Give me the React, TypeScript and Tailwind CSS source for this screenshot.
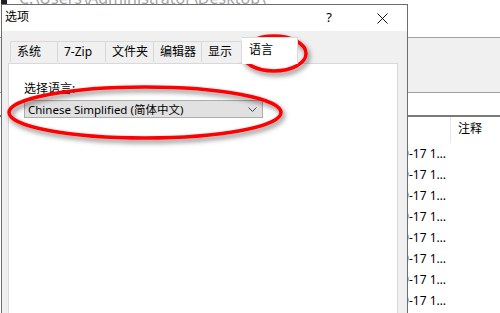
import { useState } from "react";

const font = { fontFamily: '"Noto Sans", "Noto Sans CJK SC", sans-serif' };

const tabs = ["系统", "7-Zip", "文件夹", "编辑器", "显示"];
const tabWidths = ["w-[47px]", "w-[48px]", "w-[48px]", "w-[48px]", "w-[41px]"];

const rows = Array.from({ length: 8 }, () => "2021-09-17 1…");

function Background() {
    return (
        <div className="flex flex-col w-full h-full bg-white text-[12px] text-black">
            <div className="h-[38px] bg-white border-b border-[#a0a0a0]">
                <div className="h-[4px] overflow-hidden flex items-end gap-[12px] pl-[1px]">
                    <span className="w-[6px] h-[4px] bg-[#222]" />
                    <span className="text-[#a5a5a5] text-[16px] leading-[16px] -mb-[2px]">C:\Users\Administrator\Desktop\</span>
                </div>
            </div>
            <div className="h-[55px] bg-[#f0f0f0] border-b border-[#a0a0a0]" />
            <div className="h-[24px] bg-white border-b-2 border-[#7a7a7a]" />
            <div className="flex h-[26px] items-center">
                <div className="w-[451px] h-full border-r border-[#e5e5e5]" />
                <span className="pl-[7px] pb-[2px]">注释</span>
            </div>
            {rows.map((r, i) => (
                <div key={i} className="flex h-[21px] items-center">
                    <div className="w-[448px] text-right pr-[2px] pt-[1px]">{r}</div>
                </div>
            ))}
        </div>
    );
}

function Dialog() {
    const [active] = useState(5);
    return (
        <div className="absolute left-[1px] top-[4px] w-[407px] h-[320px] border border-[#6d6d6d] flex flex-col bg-[#f0f0f0] text-[12px] text-black">
            <div className="h-[26px] bg-white flex items-center">
                <span className="pl-[3px] pb-[2px]">选项</span>
                <span className="ml-auto mr-[45px] text-[13px] pb-[1px]">?</span>
                <svg width="11" height="11" viewBox="0 0 11 11" className="mr-[19px]">
                    <path d="M0.5 0.5 L10.5 10.5 M10.5 0.5 L0.5 10.5" stroke="#111" strokeWidth="1" />
                </svg>
            </div>
            <div className="flex items-end h-[32px] pl-[8px] relative z-10">
                {tabs.map((t, i) => (
                    <div
                        key={t}
                        className={`${tabWidths[i]} h-[21px] border-t border-l ${i === 4 ? "border-r" : ""} border-[#d9d9d9] bg-[#f0f0f0] flex items-center pl-[6px] pb-[1px] mb-px`}
                    >
                        {t}
                    </div>
                ))}
                <div className={`w-[56px] h-[27px] border-t border-r border-[#d9d9d9] bg-white flex items-start pl-[7px] pt-[3px] ${active === 5 ? "-mb-px" : ""}`}>
                    语言
                </div>
            </div>
            <div className="flex-1 ml-[6px] mr-[9px] bg-white border border-[#d9d9d9] pt-[17px] pl-[15px]">
                <div className="leading-[16px]">选择语言:</div>
                <div className="mt-[3px] w-[239px] h-[18px] bg-[#e1e1e1] border border-[#adadad] flex items-center pl-[3px] pr-[5px] text-[11.5px] leading-[15px]">
                    <span>Chinese Simplified (简体中文)</span>
                    <svg width="9" height="5" viewBox="0 0 9 5" className="ml-auto">
                        <path d="M0.5 0.5 L4.5 4.5 L8.5 0.5" fill="none" stroke="#444" strokeWidth="1" />
                    </svg>
                </div>
            </div>
        </div>
    );
}

function Annotations() {
    return (
        <svg className="absolute inset-0 pointer-events-none" width="500" height="313">
            <defs>
                <filter id="sh" x="-20%" y="-50%" width="140%" height="200%">
                    <feDropShadow dx="2" dy="3" stdDeviation="2.5" floodColor="#000" floodOpacity="0.5" />
                </filter>
            </defs>
            <ellipse cx="274" cy="53.5" rx="32" ry="17.5" fill="none" stroke="#ff0000" strokeWidth="3.5" filter="url(#sh)" />
            <ellipse cx="145" cy="112.5" rx="136" ry="25.5" fill="none" stroke="#ff0000" strokeWidth="3.5" filter="url(#sh)" />
        </svg>
    );
}

export default function App() {
    return (
        <div className="relative w-[500px] h-[313px] overflow-hidden" style={font}>
            <Background />
            <Dialog />
            <Annotations />
        </div>
    );
}
